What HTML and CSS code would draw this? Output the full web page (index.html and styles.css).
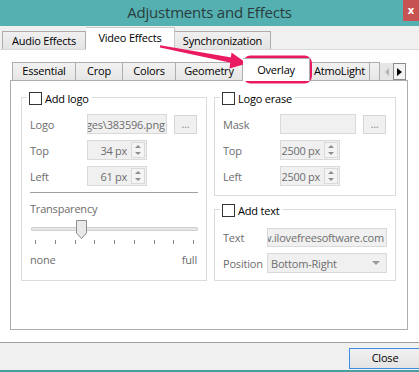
FILE: index.html
```html
<!DOCTYPE html>
<html>
<head>
<meta charset="utf-8">
<title>Adjustments and Effects</title>
<link rel="stylesheet" href="styles.css">
</head>
<body>
<div class="win">
  <div class="titlebar">
    <span class="tb-spacer"></span>
    <span class="title">Adjustments and Effects</span>
    <span class="tb-close">x</span>
  </div>
  <div class="toptabs">
    <div class="ttab w-audio">Audio Effects</div>
    <div class="ttab sel w-video">Video Effects</div>
    <div class="ttab w-sync">Synchronization</div>
  </div>
  <div class="main">
    <div class="itabs">
      <div class="itab w-ess">Essential</div>
      <div class="itab w-crop">Crop</div>
      <div class="itab w-col">Colors</div>
      <div class="itab w-geo">Geometry</div>
      <div class="itab sel w-ovl">Overlay</div>
      <div class="itab w-atmo">AtmoLight</div>
      <div class="itab w-part"></div>
      <div class="scroll-btn left"><span class="tri-l"></span></div>
      <div class="scroll-btn right"><span class="tri-r"></span></div>
    </div>
    <div class="pane">
      <div class="group g-logo">
        <div class="legend"><span class="cb"></span><span>Add logo</span></div>
        <div class="row first">
          <span class="lbl lw57">Logo</span>
          <span class="field f-logo"><span class="ftext">ges\383596.png</span></span>
          <span class="dots">...</span>
        </div>
        <div class="row">
          <span class="lbl lw57">Top</span>
          <span class="spin"><span class="sval">34 px</span><span class="sbtn"><i class="up"></i><i class="dn"></i></span></span>
        </div>
        <div class="row">
          <span class="lbl lw57">Left</span>
          <span class="spin"><span class="sval">61 px</span><span class="sbtn"><i class="up"></i><i class="dn"></i></span></span>
        </div>
        <div class="sep"></div>
        <div class="lbl tlabel">Transparency</div>
        <div class="slider">
          <div class="track"></div>
          <div class="handle"><svg width="11" height="19" viewBox="0 0 11 19"><path d="M0.5 0.5 H10.5 V13 L5.5 18.5 L0.5 13 Z" fill="#e9e9e9" stroke="#8f8f8f"/></svg></div>
        </div>
        <div class="ticks"><i></i><i></i><i></i><i></i><i></i><i></i><i></i><i></i><i></i></div>
        <div class="lbl ends"><span>none</span><span>full</span></div>
      </div>
      <div class="rcol">
        <div class="group g-erase">
          <div class="legend"><span class="cb"></span><span>Logo erase</span></div>
          <div class="row first">
            <span class="lbl lw57">Mask</span>
            <span class="field f-mask"></span>
            <span class="dots">...</span>
          </div>
          <div class="row r1">
            <span class="lbl lw57">Top</span>
            <span class="spin"><span class="sval">2500 px</span><span class="sbtn"><i class="up"></i><i class="dn"></i></span></span>
          </div>
          <div class="row">
            <span class="lbl lw57">Left</span>
            <span class="spin"><span class="sval">2500 px</span><span class="sbtn"><i class="up"></i><i class="dn"></i></span></span>
          </div>
        </div>
        <div class="group g-text">
          <div class="legend"><span class="cb"></span><span>Add text</span></div>
          <div class="row first2">
            <span class="lbl lw44">Text</span>
            <span class="field f-text"><span class="ftext">w.ilovefreesoftware.com</span></span>
          </div>
          <div class="row">
            <span class="lbl lw44">Position</span>
            <span class="field combo"><span class="ctext">Bottom-Right</span><span class="carrow"></span></span>
          </div>
        </div>
      </div>
    </div>
  </div>
  <div class="footer">
    <div class="closebtn">Close</div>
  </div>
  <svg class="annot" width="419" height="372" viewBox="0 0 419 372">
    <path d="M160 45.2 L233 57.8 L232 63 L160 47.6 Z" fill="#ea1a62"/>
    <path d="M247 63.5 L231.5 52.5 L229.5 68.5 Z" fill="#ea1a62"/>
    <rect x="244.5" y="57" width="66" height="25" rx="6" ry="6" fill="none" stroke="#ea1a62" stroke-width="3"/>
  </svg>
</div>
</body>
</html>
```
FILE: styles.css
```css
* { box-sizing: border-box; }
html, body { margin: 0; padding: 0; }
body {
  width: 419px; height: 372px; overflow: hidden;
  font-family: "Open Sans", "Noto Sans", sans-serif;
  font-size: 11px; letter-spacing: -0.2px;
  color: #000; background: #fff;
}
.win { position: relative; width: 419px; height: 372px; display: flex; flex-direction: column; background: #fff; overflow: hidden; }

.titlebar { height: 26px; flex: none; background: #55b0b1; display: flex; align-items: flex-start; }
.tb-spacer { width: 16px; flex: none; }
.title { flex: 1; text-align: center; font-size: 15px; letter-spacing: -0.2px; color: #2a3d3e; line-height: 24px; }
.tb-close { width: 16px; height: 21px; flex: none; background: #c75252; color: #fff; font-weight: bold; font-size: 11px; text-align: center; line-height: 19px; letter-spacing: 0; }

.toptabs { height: 24px; flex: none; background: #f0f0f0; display: flex; align-items: flex-end; padding-left: 2px; border-bottom: 1px solid #d9d9d9; }
.ttab { height: 18px; border: 1px solid #adadad; border-bottom: none; background: linear-gradient(#f0f0f0, #e4e4e4); text-align: center; line-height: 17px; white-space: nowrap; }
.ttab.sel { height: 23px; background: #fff; margin-bottom: -1px; line-height: 19px; border-color: #c9c9c9; }
.w-audio { width: 84px; }
.w-video { width: 89px; border-left: none; }
.w-sync { width: 96px; border-left: none; }

.main { flex: 1; display: flex; flex-direction: column; padding: 8px 11px 12px 10px; background: #fff; }
.itabs { height: 22px; flex: none; display: flex; align-items: flex-end; padding-left: 2px; }
.itab { height: 18px; border: 1px solid #adadad; border-bottom: none; border-left: none; background: linear-gradient(#f2f2f2, #e6e6e6); text-align: center; line-height: 16px; overflow: hidden; white-space: nowrap; }
.itab.w-ess { border-left: 1px solid #adadad; }
.itab.sel { height: 23px; background: #fff; margin-bottom: -1px; line-height: 21px; position: relative; z-index: 1; }
.w-ess { width: 64px; } .w-crop { width: 47px; } .w-col { width: 53px; } .w-geo { width: 67px; }
.w-ovl { width: 67px; } .w-atmo { width: 60px; } .w-part { width: 10px; }
.scroll-btn { width: 13px; height: 17px; display: flex; align-items: center; justify-content: center; }
.scroll-btn.left { background: #e6e6e6; }
.scroll-btn.right { background: #f3f3f3; border: 1px solid #8c8c8c; }
.tri-l { width: 0; height: 0; border-top: 4px solid transparent; border-bottom: 4px solid transparent; border-right: 4px solid #b5b5b5; }
.tri-r { width: 0; height: 0; border-top: 4px solid transparent; border-bottom: 4px solid transparent; border-left: 5px solid #000; }

.pane { height: 250px; flex: none; border: 1px solid #adadad; display: flex; gap: 7px; padding: 16px 11px 0 10px; background: #fff; }
.rcol { display: flex; flex-direction: column; gap: 13px; width: 182px; }
.group { border: 1px solid #dcdcdc; padding: 0 8px; display: flex; flex-direction: column; }
.g-logo { width: 186px; height: 184px; padding-right: 8px; }
.g-erase { height: 99px; }
.g-text { height: 72px; }
.legend { display: flex; align-items: center; align-self: flex-start; background: #fff; margin: -6px 0 0 -3px; padding: 0 3px 0 2px; height: 13px; line-height: 13px; white-space: nowrap; }
.cb { width: 13px; height: 13px; border: 1px solid #333; background: #fff; margin-right: 3px; flex: none; }

.lbl { color: #6d6d6d; white-space: nowrap; }
.row { display: flex; align-items: center; height: 20px; margin-top: 6px; }
.row.first { margin-top: 9px; }
.row.first2 { margin-top: 11px; height: 19px; }
.lw57 { width: 57px; flex: none; }
.lw44 { width: 44px; flex: none; }
.field { height: 20px; border: 1px solid #d9d9d9; background: #f0f0f0; color: #6d6d6d; display: flex; align-items: center; overflow: hidden; white-space: nowrap; flex: none; }
.f-logo { width: 80px; }
.f-logo .ftext { margin-left: -2px; }
.f-mask { width: 76px; }
.f-text { width: 120px; height: 19px; justify-content: flex-end; padding-right: 2px; }
.combo { width: 120px; justify-content: space-between; padding: 0 6px 0 3px; }
.carrow { width: 0; height: 0; border-left: 4px solid transparent; border-right: 4px solid transparent; border-top: 4px solid #9a9a9a; }
.dots { width: 23px; height: 19px; margin-left: 7px; border: 1px solid #d5d5d5; background: #f0f0f0; color: #8a8a8a; text-align: center; line-height: 15px; flex: none; }

.spin { width: 60px; height: 20px; border: 1px solid #d9d9d9; background: #f0f0f0; color: #6d6d6d; display: flex; align-items: center; justify-content: flex-end; padding-right: 1px; flex: none; white-space: nowrap; overflow: hidden; }
.sval { margin-right: 4px; white-space: nowrap; letter-spacing: -0.3px; }
.sbtn { width: 14px; height: 16px; border: 1px solid #dadada; background: #f4f4f4; display: flex; flex-direction: column; align-items: center; justify-content: space-around; flex: none; }
.sbtn .up { width: 0; height: 0; border-left: 3px solid transparent; border-right: 3px solid transparent; border-bottom: 3px solid #8d8d8d; }
.sbtn .dn { width: 0; height: 0; border-left: 3px solid transparent; border-right: 3px solid transparent; border-top: 3px solid #8d8d8d; }

.sep { height: 1px; background: #a0a0a0; margin-top: 6px; flex: none; }
.tlabel { margin-top: 8px; line-height: 15px; }
.slider { position: relative; height: 20px; margin: 4px 0 0 1px; }
.track { height: 4px; margin-top: 7px; background: #e6e6e6; border: 1px solid #d0d0d0; border-radius: 1px; }
.handle { position: absolute; left: 45px; top: 0; width: 11px; height: 19px; }
.handle svg { display: block; }
.ticks { display: flex; justify-content: space-between; padding: 0 4px 0 5px; height: 5px; }
.ticks i { width: 1px; height: 4px; background: #8a8a8a; display: block; }
.ends { display: flex; justify-content: space-between; margin-top: 7px; line-height: 15px; padding-right: 1px; }

.footer { height: 30px; flex: none; border-top: 1px solid #a0a0a0; border-bottom: 2px solid #4a9e9e; background: #f0f0f0; display: flex; justify-content: flex-end; align-items: flex-start; padding-top: 5px; overflow: hidden; }
.closebtn { width: 72px; height: 21px; margin-right: -2px; border: 1px solid #3c8de4; background: linear-gradient(#f1f1f1, #e3e3e3); text-align: center; line-height: 18px; }

.annot { position: absolute; left: 0; top: 0; pointer-events: none; }
```
